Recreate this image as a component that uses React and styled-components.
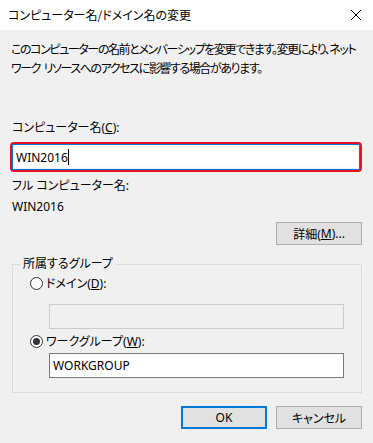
import styled, { createGlobalStyle } from "styled-components";

const GlobalStyle = createGlobalStyle`
  html, body {
    margin: 0;
    padding: 0;
    background: #f0f0f0;
  }
  body {
    font-family: "Noto Sans", "Noto Sans CJK JP", sans-serif;
    font-size: 12px;
    color: #000;
    font-feature-settings: "palt";
  }
`;

const CloseIcon = () => (
  <svg width="12" height="12" viewBox="0 0 12 12">
    <path d="M1 1 L11 11 M11 1 L1 11" stroke="#000" strokeWidth="1" fill="none" />
  </svg>
);

const App = () => {
  return (
    <Window>
      <GlobalStyle />
      <TitleBar>
        <Title>コンピューター名/ドメイン名の変更</Title>
        <CloseButton>
          <CloseIcon />
        </CloseButton>
      </TitleBar>

      <Body>
        <Description>
          このコンピューターの名前とメンバーシップを変更できます。変更により、ネット
          <br />
          ワーク{"\u00a0\u00a0"}リソースへのアクセスに影響する場合があります。
        </Description>

        <Label $top={42}>
          コンピューター名(<u>C</u>):
        </Label>
        <FocusRing>
          <TextBox>
            WIN2016
            <Caret />
          </TextBox>
        </FocusRing>

        <Label $top={6}>フル コンピューター名:</Label>
        <Label $top={5}>WIN2016</Label>

        <ButtonRow $top={7}>
          <Button>
            詳細(<u>M</u>)...
          </Button>
        </ButtonRow>

        <GroupBox>
          <Legend>所属するグループ</Legend>
          <RadioRow $top={3}>
            <Radio />
            <span>
              ドメイン(<u>D</u>):
            </span>
          </RadioRow>
          <Field $top={13} $disabled />
          <RadioRow $top={4}>
            <Radio $checked />
            <span>
              ワークグループ(<u>W</u>):
            </span>
          </RadioRow>
          <Field $top={4}>WORKGROUP</Field>
        </GroupBox>

        <ButtonRow $top={13}>
          <Button $default>OK</Button>
          <Button>キャンセル</Button>
        </ButtonRow>
      </Body>
    </Window>
  );
};

const Window = styled.div`
  width: 373px;
  height: 443px;
  background: #f0f0f0;
  overflow: hidden;
`;

const TitleBar = styled.div`
  height: 30px;
  background: #fff;
  display: flex;
  align-items: center;
  justify-content: space-between;
  padding-left: 8px;
  box-sizing: border-box;
`;

const Title = styled.div`
  font-family: "Noto Sans CJK JP", sans-serif;
  line-height: 16px;
  white-space: nowrap;
`;

const CloseButton = styled.div`
  width: 30px;
  height: 30px;
  margin-right: 2px;
  display: flex;
  align-items: center;
  justify-content: center;
`;

const Body = styled.div`
  padding: 10px 11px 0 12px;
`;

const Description = styled.div`
  line-height: 19px;
  white-space: nowrap;
  margin-left: -1px;
  letter-spacing: -1.4px;
`;

const Label = styled.div`
  margin-top: ${(p) => p.$top}px;
  line-height: 16px;
  white-space: nowrap;
`;

const FocusRing = styled.div`
  margin-top: 6px;
  margin-left: -2px;
  border: 2px solid #e81123;
  border-radius: 4px;
`;

const TextBox = styled.div`
  height: 26px;
  box-sizing: border-box;
  border: 1px solid #0078d7;
  background: #fff;
  box-shadow: inset 0 0 3px rgba(0, 0, 0, 0.12);
  padding-left: 3px;
  display: flex;
  align-items: center;
`;

const Caret = styled.span`
  display: inline-block;
  width: 1px;
  height: 16px;
  background: #000;
`;

const ButtonRow = styled.div`
  margin-top: ${(p) => p.$top}px;
  display: flex;
  justify-content: flex-end;
  gap: 9px;
`;

const Button = styled.div`
  width: 86px;
  height: 23px;
  box-sizing: border-box;
  background: #e1e1e1;
  border: ${(p) => (p.$default ? "2px solid #0078d7" : "1px solid #adadad")};
  display: flex;
  align-items: center;
  justify-content: center;
  white-space: nowrap;
`;

const GroupBox = styled.fieldset`
  margin: 11px 0 0 0;
  padding: 0 17px 14px 36px;
  border: 1px solid #dcdcdc;
  min-width: 0;
`;

const Legend = styled.legend`
  margin-left: -28px;
  padding: 0 2px;
  line-height: 16px;
`;

const RadioRow = styled.div`
  margin-top: ${(p) => p.$top}px;
  margin-left: -19px;
  height: 16px;
  display: flex;
  align-items: center;
  gap: 3px;
  white-space: nowrap;
`;

const Radio = styled.span`
  width: 13px;
  height: 13px;
  box-sizing: border-box;
  border-radius: 50%;
  border: 1px solid #333;
  background: #fff;
  display: flex;
  align-items: center;
  justify-content: center;
  &::after {
    content: "";
    width: 7px;
    height: 7px;
    border-radius: 50%;
    background: ${(p) => (p.$checked ? "#333" : "transparent")};
  }
`;

const Field = styled.div`
  margin-top: ${(p) => p.$top}px;
  height: 25px;
  box-sizing: border-box;
  border: 1px solid ${(p) => (p.$disabled ? "#cccccc" : "#7a7a7a")};
  background: ${(p) => (p.$disabled ? "#f0f0f0" : "#fff")};
  padding-left: 3px;
  display: flex;
  align-items: center;
`;

export default App;
